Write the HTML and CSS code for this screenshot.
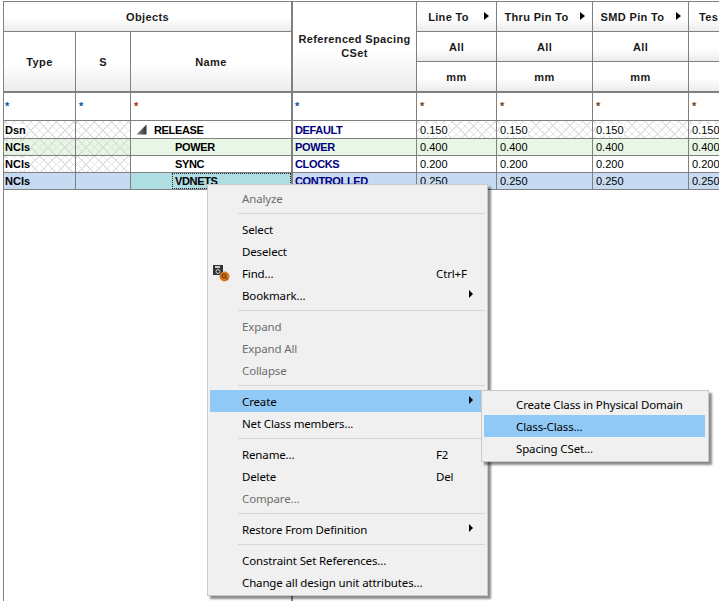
FILE: index.html
```html
<!DOCTYPE html>
<html lang="en">

<head>
    <meta charset="UTF-8">
    <meta name="viewport" content="width=device-width, initial-scale=1.0">
    <title>Constraint Manager</title>
    <link rel="stylesheet" href="styles.css">
</head>

<body>
    <div class="sheet">
        <!-- header rows -->
        <div class="cell head objects">Objects</div>
        <div class="cell head refcset">Referenced Spacing<br>CSet</div>
        <div class="cell head"><span class="title">Line To</span><span class="arrow-slot"><i class="arrow"></i></span></div>
        <div class="cell head"><span class="title">Thru Pin To</span><span class="arrow-slot"><i class="arrow"></i></span></div>
        <div class="cell head"><span class="title">SMD Pin To</span><span class="arrow-slot"><i class="arrow"></i></span></div>
        <div class="cell head test">Tes</div>

        <div class="cell head tall">Type</div>
        <div class="cell head tall">S</div>
        <div class="cell head tall wide-line">Name</div>
        <div class="cell head">All</div>
        <div class="cell head">All</div>
        <div class="cell head">All</div>
        <div class="cell head"></div>

        <div class="cell head low">mm</div>
        <div class="cell head low">mm</div>
        <div class="cell head low">mm</div>
        <div class="cell head low"></div>

        <!-- filter row -->
        <div class="cell filter first blue">*</div>
        <div class="cell filter blue">*</div>
        <div class="cell filter red wide-line">*</div>
        <div class="cell filter cset-filter blue">*</div>
        <div class="cell filter brown">*</div>
        <div class="cell filter brown">*</div>
        <div class="cell filter brown">*</div>
        <div class="cell filter brown">*</div>

        <!-- data rows -->
        <div class="cell data first bold hatch"><span class="plate">Dsn</span></div>
        <div class="cell data hatch"></div>
        <div class="cell data bold tight name-root wide-line">
            <svg class="tree-icon" width="11" height="11" viewBox="0 0 11 11">
                <defs>
                    <linearGradient id="treeFill" x1="0" y1="0" x2="1" y2="0">
                        <stop offset="0" stop-color="#8a8a8a"/>
                        <stop offset="1" stop-color="#333"/>
                    </linearGradient>
                </defs>
                <polygon points="10.5,0.5 10.5,10.5 0.5,10.5" fill="url(#treeFill)"/>
            </svg>RELEASE
        </div>
        <div class="cell data bold tight cset">DEFAULT</div>
        <div class="cell data hatch"><span class="plate">0.150</span></div>
        <div class="cell data hatch"><span class="plate">0.150</span></div>
        <div class="cell data hatch"><span class="plate">0.150</span></div>
        <div class="cell data hatch"><span class="plate">0.150</span></div>

        <div class="cell data first bold hatch-green"><span class="plate-green">NCIs</span></div>
        <div class="cell data hatch-green"></div>
        <div class="cell data bold tight name-child wide-line green">POWER</div>
        <div class="cell data bold tight cset green">POWER</div>
        <div class="cell data green">0.400</div>
        <div class="cell data green">0.400</div>
        <div class="cell data green">0.400</div>
        <div class="cell data green">0.400</div>

        <div class="cell data first bold hatch"><span class="plate">NCIs</span></div>
        <div class="cell data hatch"></div>
        <div class="cell data bold tight name-child wide-line">SYNC</div>
        <div class="cell data bold tight cset">CLOCKS</div>
        <div class="cell data">0.200</div>
        <div class="cell data">0.200</div>
        <div class="cell data">0.200</div>
        <div class="cell data">0.200</div>

        <div class="cell data first bold selected">NCIs</div>
        <div class="cell data selected"></div>
        <div class="cell data bold tight name-current wide-line"><span class="focus">VDNETS</span></div>
        <div class="cell data bold tight cset selected">CONTROLLED</div>
        <div class="cell data selected">0.250</div>
        <div class="cell data selected">0.250</div>
        <div class="cell data selected">0.250</div>
        <div class="cell data selected">0.250</div>

        <div class="blank"></div>
    </div>

    <div class="menu context-menu">
        <div class="item disabled"><span class="gutter"></span><span class="label">Analyze</span></div>
        <div class="sep"></div>
        <div class="item"><span class="gutter"></span><span class="label">Select</span></div>
        <div class="item"><span class="gutter"></span><span class="label">Deselect</span></div>
        <div class="item">
            <span class="gutter">
                <svg width="17" height="17" viewBox="0 0 17 17">
                    <rect x="0" y="0" width="10" height="10" fill="#333"/>
                    <rect x="2" y="1" width="5" height="2" fill="#ccc"/>
                    <circle cx="5" cy="6.5" r="2" fill="none" stroke="#ccc" stroke-width="1"/>
                    <circle cx="11.5" cy="11.5" r="5" fill="#d9761f"/>
                    <circle cx="11" cy="11" r="2" fill="none" stroke="#5a2c08" stroke-width="1"/>
                    <path d="M12.5 12.5L14.5 14.5" stroke="#5a2c08" stroke-width="1"/>
                </svg>
            </span>
            <span class="label">Find...</span><span class="key">Ctrl+F</span>
        </div>
        <div class="item"><span class="gutter"></span><span class="label">Bookmark...</span><span class="key"><i class="arrow small"></i></span></div>
        <div class="sep"></div>
        <div class="item disabled"><span class="gutter"></span><span class="label">Expand</span></div>
        <div class="item disabled"><span class="gutter"></span><span class="label">Expand All</span></div>
        <div class="item disabled"><span class="gutter"></span><span class="label">Collapse</span></div>
        <div class="sep"></div>
        <div class="item active"><span class="gutter"></span><span class="label">Create</span><span class="key"><i class="arrow small"></i></span></div>
        <div class="item"><span class="gutter"></span><span class="label">Net Class members...</span></div>
        <div class="sep"></div>
        <div class="item"><span class="gutter"></span><span class="label">Rename...</span><span class="key">F2</span></div>
        <div class="item"><span class="gutter"></span><span class="label">Delete</span><span class="key">Del</span></div>
        <div class="item disabled"><span class="gutter"></span><span class="label">Compare...</span></div>
        <div class="sep"></div>
        <div class="item"><span class="gutter"></span><span class="label">Restore From Definition</span><span class="key"><i class="arrow small"></i></span></div>
        <div class="sep"></div>
        <div class="item"><span class="gutter"></span><span class="label">Constraint Set References...</span></div>
        <div class="item"><span class="gutter"></span><span class="label">Change all design unit attributes...</span></div>
    </div>

    <div class="menu sub-menu">
        <div class="item"><span class="gutter"></span><span class="label">Create Class in Physical Domain</span></div>
        <div class="item active"><span class="gutter"></span><span class="label">Class-Class...</span></div>
        <div class="item"><span class="gutter"></span><span class="label">Spacing CSet...</span></div>
    </div>
</body>

</html>
```
FILE: styles.css
```css
html,
body {
    margin: 0;
    height: 100%;
    overflow: hidden;
    background: #fff;
}

body {
    font-family: "Liberation Sans", Arial, sans-serif;
    font-size: 11px;
    color: #000;
}

.sheet {
    display: grid;
    grid-template-columns: 72px 55px 162px 124px 80px 96px 96px 1fr;
    grid-template-rows: 30px 30px 31px 28px 18px 17px 17px 17px 1fr;
    width: 716px;
    height: 599px;
    margin: 1px 0 0 3px;
    border-top: 1px solid #808080;
    border-left: 1px solid #808080;
    overflow: hidden;
}

.cell {
    box-sizing: border-box;
    border-right: 1px solid #808080;
    border-bottom: 1px solid #808080;
    display: flex;
    align-items: center;
    min-width: 0;
    white-space: nowrap;
}

.wide-line {
    border-right-width: 2px;
}

.head {
    justify-content: center;
    text-align: center;
    font-weight: bold;
    letter-spacing: 0.35px;
    color: #1a1a1a;
    background: linear-gradient(#fff 55%, #ececec);
}

.low {
    border-bottom-width: 2px;
}

.objects {
    grid-column: 1 / span 3;
    border-right-width: 2px;
}

.refcset {
    grid-column: 4;
    grid-row: 1 / span 3;
    line-height: 14px;
    padding-bottom: 1px;
    border-bottom-width: 2px;
}

.tall {
    grid-row: 2 / span 2;
    border-bottom-width: 2px;
}

.title {
    flex: 1;
    text-align: center;
}

.arrow-slot {
    flex: none;
    box-sizing: border-box;
    width: 16px;
    padding-left: 4px;
    margin-bottom: 1px;
}

.arrow {
    display: block;
    width: 0;
    height: 0;
    border-left: 5px solid #000;
    border-top: 4.5px solid transparent;
    border-bottom: 4.5px solid transparent;
}

.arrow.small {
    margin: 0 0 2px 33px;
    border-left-width: 4px;
    border-top-width: 4px;
    border-bottom-width: 4px;
}

.test {
    justify-content: flex-start;
    padding-left: 10px;
}

.filter {
    font-weight: bold;
    padding: 0 0 2px 3px;
    background: #fff;
}

.filter.first,
.data.first {
    padding-left: 1px;
}

.cset-filter {
    padding-left: 2px;
}

.filter.blue {
    color: #0b4f9e;
}

.filter.red {
    color: #b02a1a;
}

.filter.brown {
    color: #7a3d10;
}

.data {
    padding-left: 3px;
}

.bold {
    font-weight: bold;
}

.tight {
    letter-spacing: -0.35px;
}

.hatch {
    background-color: #fff;
    background-image:
        repeating-linear-gradient(45deg, #e2e2e2 0 1px, transparent 1px 6px),
        repeating-linear-gradient(-45deg, #e2e2e2 0 1px, transparent 1px 6px);
}

.hatch-green {
    background-color: #e8f6e6;
    background-image:
        repeating-linear-gradient(45deg, #d8e0d8 0 1px, transparent 1px 6px),
        repeating-linear-gradient(-45deg, #d8e0d8 0 1px, transparent 1px 6px);
}

.plate {
    background: #fff;
}

.plate-green {
    background: #e8f6e6;
}

.green {
    background: #e8f6e6;
}

.selected {
    background: #c6daf2;
}

.cset {
    color: #00007c;
    padding-left: 2px;
}

.tree-icon {
    margin: 0 7px 0 2px;
    flex: none;
}

.name-child {
    padding-left: 44px;
}

.name-current {
    padding: 0 0 0 41px;
    background: #aedde2;
}

.focus {
    flex: 1;
    align-self: stretch;
    display: flex;
    align-items: center;
    padding-left: 3px;
    outline: 1px dotted #222;
    outline-offset: -1px;
}

.blank {
    grid-column: 1 / span 3;
    border-right: 2px solid #808080;
}

.menu {
    position: absolute;
    box-sizing: border-box;
    padding: 2px;
    border: 1px solid #cacaca;
    background: #f0f0f0;
    box-shadow: 3px 3px 2px rgba(0, 0, 0, 0.45);
    font-family: "Noto Sans", sans-serif;
    font-size: 11.5px;
    letter-spacing: -0.14px;
    color: #000;
}

.context-menu {
    left: 207px;
    top: 184px;
    width: 281px;
}

.sub-menu {
    left: 481px;
    top: 390px;
    width: 228px;
}

.item {
    display: flex;
    align-items: center;
    height: 22px;
    white-space: nowrap;
}

.gutter {
    flex: none;
    display: flex;
    align-items: center;
    width: 29px;
    padding-left: 3px;
    box-sizing: content-box;
}

.sub-menu .active {
    margin-right: 1px;
}

.label {
    flex: 1;
}

.key {
    flex: none;
    width: 49px;
}

.disabled {
    color: #6d6d6d;
}

.active {
    background: #90c8f6;
}

.sep {
    height: 1px;
    margin: 4px 0 4px 28px;
    background: #d7d7d7;
}
```
